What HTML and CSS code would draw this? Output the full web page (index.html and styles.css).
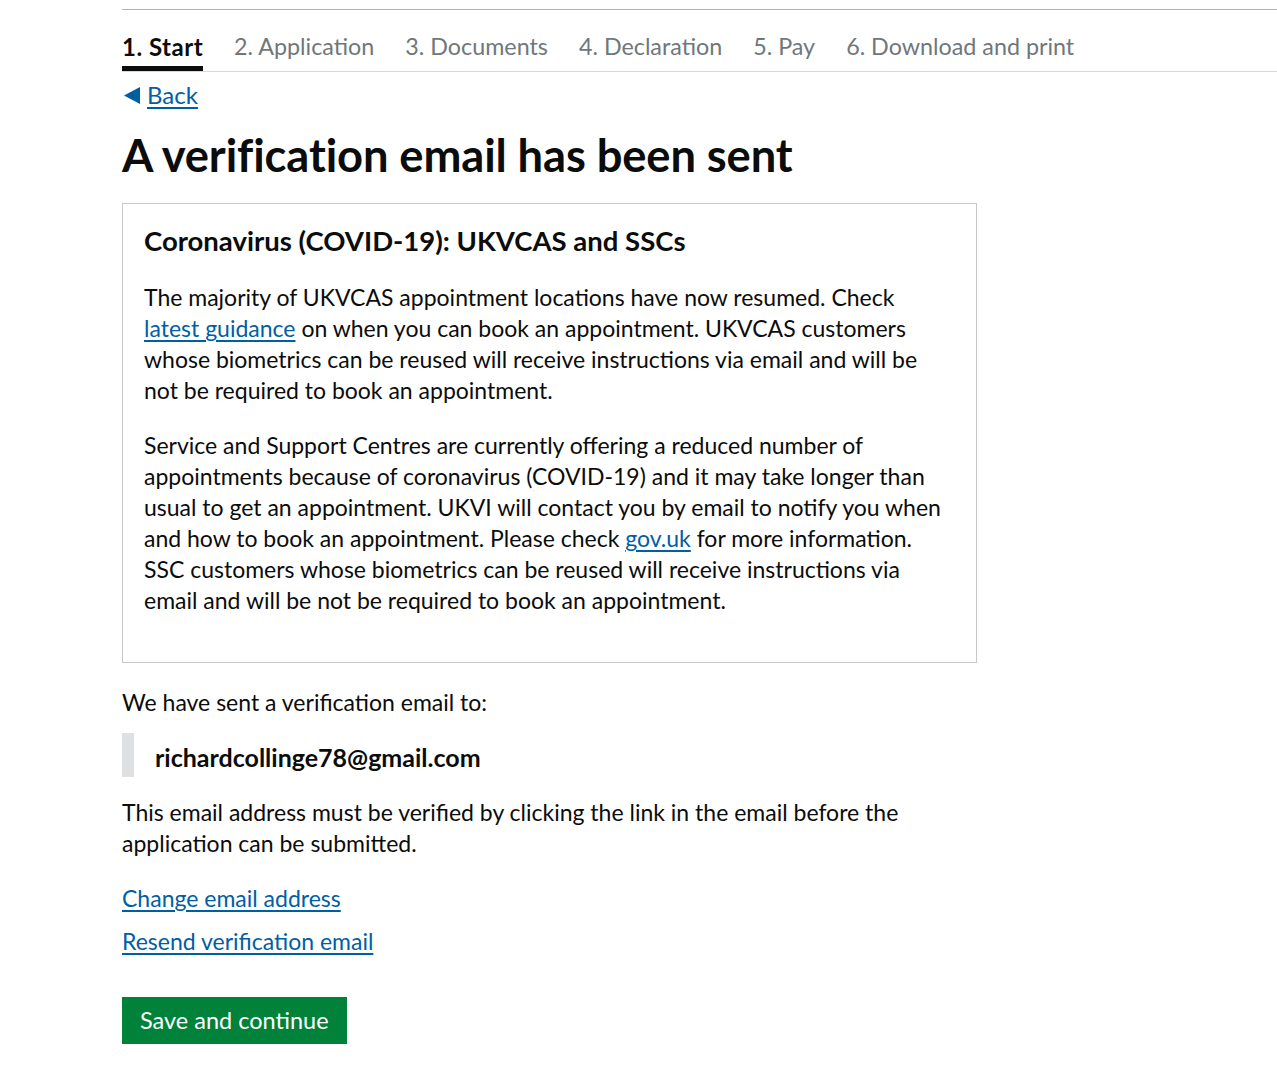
FILE: index.html
```html
<!DOCTYPE html>
<html lang="en">
<head>
<meta charset="utf-8">
<title>A verification email has been sent</title>
<link rel="stylesheet" href="styles.css">
</head>
<body>
<div class="page">
  <nav class="steps">
    <ul class="steps-list">
      <li class="step step-active">1. Start</li>
      <li class="step">2. Application</li>
      <li class="step">3. Documents</li>
      <li class="step">4. Declaration</li>
      <li class="step">5. Pay</li>
      <li class="step">6. Download and print</li>
    </ul>
  </nav>
  <main class="main">
    <div class="back-row">
      <svg class="back-arrow" width="16" height="17" viewBox="0 0 16 17" aria-hidden="true"><polygon points="0,8.5 16,0 16,17" fill="#005ea5"/></svg>
      <a class="link back-link" href="#">Back</a>
    </div>
    <h1 class="title">A verification email has been sent</h1>
    <div class="notice">
      <h2 class="notice-title">Coronavirus (COVID-19): UKVCAS and SSCs</h2>
      <p class="body notice-p1">The majority of UKVCAS appointment locations have now resumed. Check<br><a class="link" href="#">latest guidance</a> on when you can book an appointment. UKVCAS customers<br>whose biometrics can be reused will receive instructions via email and will be<br>not be required to book an appointment.</p>
      <p class="body notice-p2">Service and Support Centres are currently offering a reduced number of<br>appointments because of coronavirus (COVID-19) and it may take longer than<br>usual to get an appointment. UKVI will contact you by email to notify you when<br>and how to book an appointment. Please check <a class="link" href="#">gov.uk</a> for more information.<br>SSC customers whose biometrics can be reused will receive instructions via<br>email and will be not be required to book an appointment.</p>
    </div>
    <p class="body sent-to">We have sent a verification email to:</p>
    <div class="inset"><span class="email">richardcollinge78@gmail.com</span></div>
    <p class="body must-verify">This email address must be verified by clicking the link in the email before the<br>application can be submitted.</p>
    <p class="body link-row"><a class="link" href="#">Change email address</a></p>
    <p class="body link-row link-row-2"><a class="link" href="#">Resend verification email</a></p>
    <button class="button" type="button">Save and continue</button>
  </main>
</div>
</body>
</html>
```
FILE: styles.css
```css
html, body {
  margin: 0;
  padding: 0;
  background: #ffffff;
}
body {
  font-family: Lato, "Noto Sans", sans-serif;
  color: #0b0c0c;
}
.page {
  padding-top: 9px;
  padding-left: 122px;
}
.steps {
  border-top: 1px solid #b1b4b6;
  border-bottom: 1px solid #d8d8d8;
}
.steps-list {
  list-style: none;
  margin: 0;
  padding: 0;
  display: flex;
  gap: 31px;
}
.step {
  font-size: 23.3px;
  line-height: 31px;
  padding-top: 21px;
  padding-bottom: 4px;
  border-bottom: 5px solid transparent;
  color: #6f777b;
  white-space: nowrap;
}
.step-active {
  color: #0b0c0c;
  font-weight: 700;
  font-size: 24px;
  letter-spacing: 0.5px;
  border-bottom-color: #0b0c0c;
}
.main {
  width: 860px;
}
.link {
  color: #005ea5;
  text-decoration: underline;
  text-decoration-thickness: 1.5px;
  text-underline-offset: 3px;
}
.back-row {
  margin-top: 7px;
  display: flex;
  align-items: flex-start;
  gap: 7px;
  padding-left: 2px;
  font-size: 24px;
  line-height: 31px;
}
.back-arrow {
  display: block;
  margin-top: 8px;
}
.title {
  margin: 18px 0 0;
  font-size: 45.3px;
  line-height: 53px;
  font-weight: 700;
  letter-spacing: -0.1px;
}
.notice {
  margin-top: 22px;
  border: 1px solid #c8c8c8;
  padding: 20px 21px 46px;
  width: 811px;
}
.notice-title {
  margin: 0;
  font-size: 27.5px;
  line-height: 33px;
  font-weight: 700;
}
.body {
  margin: 0;
  font-size: 23px;
  line-height: 31px;
  white-space: nowrap;
}
.notice-p1 {
  margin-top: 25px;
}
.notice-p2 {
  margin-top: 24px;
}
.sent-to {
  margin-top: 24px;
}
.inset {
  margin-top: 15px;
  border-left: 12px solid #dee0e2;
  padding: 9px 0 4px 21px;
  font-size: 25px;
  line-height: 31px;
}
.email {
  font-weight: 700;
}
.must-verify {
  margin-top: 20px;
}
.link-row {
  margin-top: 24px;
}
.link-row-2 {
  margin-top: 12px;
}
.button {
  display: block;
  margin-top: 40px;
  font-family: inherit;
  font-size: 23.5px;
  line-height: 31px;
  color: #ffffff;
  background: #00823b;
  border: 0;
  border-radius: 0;
  padding: 8px 18px 8px;
  box-shadow: 0 3px 0 #002d18;
  cursor: pointer;
}
```
